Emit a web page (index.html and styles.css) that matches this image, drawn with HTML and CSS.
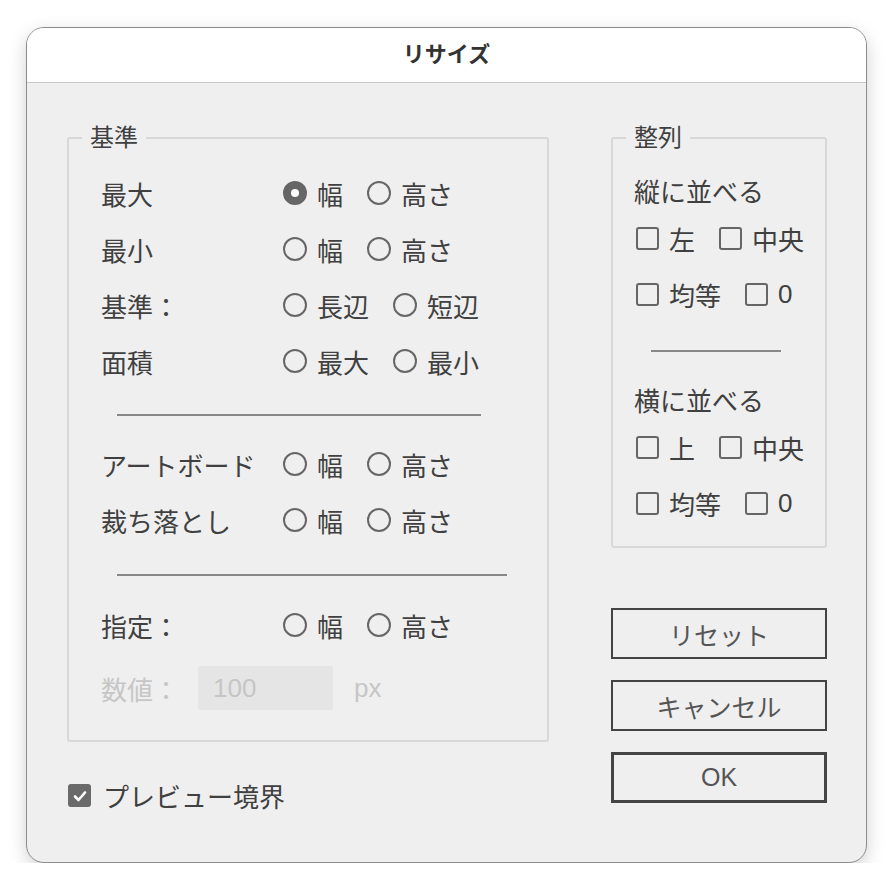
FILE: index.html
```html
<!DOCTYPE html>
<html lang="ja">

<head>
    <meta charset="UTF-8">
    <title>リサイズ</title>
    <link rel="stylesheet" href="styles.css">
</head>

<body>
    <div class="window">
        <div class="titlebar">リサイズ</div>

        <div class="content">
            <div class="leftCol">
                <fieldset class="group basis">
                    <legend>基準</legend>

                    <div class="row">
                        <span class="label">最大</span>
                        <label class="opt"><span class="radio checked"></span>幅</label>
                        <label class="opt"><span class="radio"></span>高さ</label>
                    </div>
                    <div class="row">
                        <span class="label">最小</span>
                        <label class="opt"><span class="radio"></span>幅</label>
                        <label class="opt"><span class="radio"></span>高さ</label>
                    </div>
                    <div class="row">
                        <span class="label">基準：</span>
                        <label class="opt"><span class="radio"></span>長辺</label>
                        <label class="opt"><span class="radio"></span>短辺</label>
                    </div>
                    <div class="row">
                        <span class="label">面積</span>
                        <label class="opt"><span class="radio"></span>最大</label>
                        <label class="opt"><span class="radio"></span>最小</label>
                    </div>

                    <hr class="sep sep1">

                    <div class="row">
                        <span class="label">アートボード</span>
                        <label class="opt"><span class="radio"></span>幅</label>
                        <label class="opt"><span class="radio"></span>高さ</label>
                    </div>
                    <div class="row">
                        <span class="label">裁ち落とし</span>
                        <label class="opt"><span class="radio"></span>幅</label>
                        <label class="opt"><span class="radio"></span>高さ</label>
                    </div>

                    <hr class="sep sep2">

                    <div class="row">
                        <span class="label">指定：</span>
                        <label class="opt"><span class="radio"></span>幅</label>
                        <label class="opt"><span class="radio"></span>高さ</label>
                    </div>
                    <div class="row valueRow disabled">
                        <span class="label short">数値：</span>
                        <span class="numInput">100</span>
                        <span class="unit">px</span>
                    </div>
                </fieldset>

                <label class="preview">
                    <span class="checkbox checked">
                        <svg width="16" height="16" viewBox="0 0 16 16">
                            <path d="M3 8.5 L6.5 12 L13 4.5" fill="none" stroke="#fff" stroke-width="2.6" stroke-linecap="round" stroke-linejoin="round" />
                        </svg>
                    </span>
                    プレビュー境界
                </label>
            </div>

            <div class="rightCol">
                <fieldset class="group align">
                    <legend>整列</legend>

                    <div class="subhead">縦に並べる</div>
                    <div class="checkRow">
                        <label class="opt"><span class="checkbox"></span>左</label>
                        <label class="opt"><span class="checkbox"></span>中央</label>
                    </div>
                    <div class="checkRow">
                        <label class="opt"><span class="checkbox"></span>均等</label>
                        <label class="opt"><span class="checkbox"></span>0</label>
                    </div>

                    <hr class="sep sep3">

                    <div class="subhead">横に並べる</div>
                    <div class="checkRow">
                        <label class="opt"><span class="checkbox"></span>上</label>
                        <label class="opt"><span class="checkbox"></span>中央</label>
                    </div>
                    <div class="checkRow last">
                        <label class="opt"><span class="checkbox"></span>均等</label>
                        <label class="opt"><span class="checkbox"></span>0</label>
                    </div>
                </fieldset>

                <div class="buttons">
                    <button>リセット</button>
                    <button>キャンセル</button>
                    <button class="ok">OK</button>
                </div>
            </div>
        </div>
    </div>
</body>

</html>
```

FILE: styles.css
```css
body {
    margin: 0;
    padding: 27px 0 0 26px;
    background: #fff;
    font-family: "Liberation Sans", "Noto Sans CJK JP", sans-serif;
    color: #404040;
}

.window {
    width: 839px;
    height: 834px;
    border: 1px solid #8c8c8c;
    border-radius: 18px;
    background-color: #efefef;
    box-shadow: 0 6px 18px rgba(0, 0, 0, 0.18);
    overflow: hidden;
    display: flex;
    flex-direction: column;
}

.titlebar {
    height: 48px;
    padding-bottom: 6px;
    flex: none;
    background-color: #fff;
    border-bottom: 1px solid #c8c8c8;
    display: flex;
    justify-content: center;
    align-items: center;
    font-size: 22px;
    font-weight: bold;
    color: #333;
}

.content {
    display: flex;
    gap: 62px;
    padding: 41px 39px 0 40px;
}

.leftCol {
    width: 482px;
}

.rightCol {
    width: 216px;
}

.group {
    margin: 0;
    padding: 0;
    border: 2px solid #d8d8d8;
    border-radius: 3px;
    min-width: 0;
}

.group legend {
    padding: 0 8px;
    font-size: 24px;
    line-height: 28px;
    color: #404040;
}

.basis {
    padding: 13px 0 24px 32px;
}

.basis legend {
    margin-left: -19px;
}

.row {
    display: flex;
    align-items: center;
    height: 56px;
    font-size: 26px;
}

.label {
    width: 182px;
    flex: none;
    white-space: nowrap;
}

.opt {
    display: flex;
    align-items: center;
    margin-right: 24px;
    white-space: nowrap;
}

.radio {
    width: 20px;
    height: 20px;
    border: 2px solid #666;
    border-radius: 50%;
    margin-right: 10px;
    box-sizing: content-box;
    position: relative;
}

.radio.checked {
    background-color: #666;
}

.radio.checked::after {
    content: "";
    position: absolute;
    left: 6px;
    top: 6px;
    width: 8px;
    height: 8px;
    border-radius: 50%;
    background-color: #fff;
}

.sep {
    border: none;
    height: 2px;
    background-color: #888;
    margin: 25px 0 20px 16px;
}

.sep1 {
    width: 364px;
}

.sep2 {
    width: 390px;
    margin-top: 26px;
    margin-bottom: 21px;
}

.valueRow {
    margin-top: 7px;
}

.disabled {
    color: #c6c6c6;
}

.label.short {
    width: 97px;
}

.numInput {
    width: 120px;
    height: 44px;
    padding-left: 15px;
    background-color: #e5e5e5;
    border-radius: 3px;
    display: flex;
    align-items: center;
}

.unit {
    margin-left: 21px;
}

.preview {
    display: flex;
    align-items: center;
    margin-top: 35px;
    margin-left: 1px;
    font-size: 26px;
    color: #404040;
}

.checkbox {
    width: 19px;
    height: 19px;
    border: 2px solid #666;
    border-radius: 3px;
    margin-right: 10px;
    display: flex;
    justify-content: center;
    align-items: center;
    box-sizing: content-box;
}

.checkbox.checked {
    background-color: #6a6a6a;
    border-color: #6a6a6a;
    margin-right: 12px;
}

.align {
    padding: 18px 0 15px 21px;
}

.align legend {
    margin-left: -8px;
}

.subhead {
    font-size: 26px;
    height: 40px;
    display: flex;
    align-items: center;
    white-space: nowrap;
}

.checkRow {
    display: flex;
    align-items: center;
    height: 56px;
    font-size: 26px;
}

.checkRow .opt {
    margin-left: 2px;
    margin-right: 22px;
}

.sep3 {
    width: 130px;
    margin: 28px 0 27px 17px;
}

.buttons {
    display: flex;
    flex-direction: column;
    gap: 21px;
    margin-top: 60px;
}

button {
    height: 51px;
    border: 2px solid #444;
    background-color: transparent;
    font-family: inherit;
    font-size: 25px;
    color: #555;
    padding: 0;
}

button.ok {
    border-width: 3px;
}
```
